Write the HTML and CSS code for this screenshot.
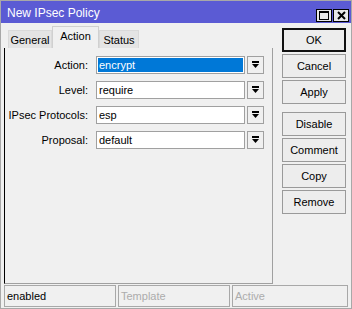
FILE: index.html
```html
<!DOCTYPE html>
<html>
<head>
    <title>New IPsec Policy</title>
    <link rel="stylesheet" href="styles.css">
</head>
<body>
    <div class="window">
        <div class="titlebar">
            <span class="title">New IPsec Policy</span>
            <div class="caption-buttons">
                <span class="cap-btn">
                    <svg width="10" height="9" viewBox="0 0 10 9"><rect x="0.5" y="0.5" width="9" height="8" fill="none" stroke="#000"/><rect x="0" y="0" width="10" height="2" fill="#000"/></svg>
                </span>
                <span class="cap-btn">
                    <svg width="9" height="9" viewBox="0 0 9 9"><path d="M1 1L8 8M8 1L1 8" stroke="#000" stroke-width="2"/></svg>
                </span>
            </div>
        </div>

        <div class="body">
            <div class="main">
                <div class="tabs">
                    <div class="tab tab-general">General</div>
                    <div class="tab tab-action active">Action</div>
                    <div class="tab tab-status">Status</div>
                </div>
                <div class="panel">
                    <div class="row">
                        <span class="label">Action:</span>
                        <div class="field selected">encrypt</div>
                        <div class="drop"><svg width="7" height="8" viewBox="0 0 7 8"><rect x="0" y="0" width="7" height="2"/><path d="M0 3H7L3.5 7Z"/></svg></div>
                    </div>
                    <div class="row">
                        <span class="label">Level:</span>
                        <div class="field">require</div>
                        <div class="drop"><svg width="7" height="8" viewBox="0 0 7 8"><rect x="0" y="0" width="7" height="2"/><path d="M0 3H7L3.5 7Z"/></svg></div>
                    </div>
                    <div class="row">
                        <span class="label">IPsec Protocols:</span>
                        <div class="field">esp</div>
                        <div class="drop"><svg width="7" height="8" viewBox="0 0 7 8"><rect x="0" y="0" width="7" height="2"/><path d="M0 3H7L3.5 7Z"/></svg></div>
                    </div>
                    <div class="row">
                        <span class="label">Proposal:</span>
                        <div class="field">default</div>
                        <div class="drop"><svg width="7" height="8" viewBox="0 0 7 8"><rect x="0" y="0" width="7" height="2"/><path d="M0 3H7L3.5 7Z"/></svg></div>
                    </div>
                </div>
            </div>

            <div class="buttons">
                <button class="btn default">OK</button>
                <button class="btn">Cancel</button>
                <button class="btn">Apply</button>
                <button class="btn group-start">Disable</button>
                <button class="btn">Comment</button>
                <button class="btn">Copy</button>
                <button class="btn">Remove</button>
            </div>
        </div>

        <div class="statusbar">
            <div class="status-cell first">enabled</div>
            <div class="status-cell dim">Template</div>
            <div class="status-cell dim last">Active</div>
        </div>
    </div>
</body>
</html>
```

FILE: styles.css
```css
body {
    margin: 0;
    font-family: "Liberation Sans", Arial, sans-serif;
    font-size: 11px;
    color: #000;
    background-color: #f0f0f0;
}

.window {
    width: 352px;
    height: 309px;
    box-sizing: border-box;
    border: 1px solid #a8a8a8;
    background-color: #f0f0f0;
    display: flex;
    flex-direction: column;
}

.titlebar {
    height: 22px;
    flex: none;
    background-color: #5b5bd4;
    color: #fff;
    display: flex;
    justify-content: space-between;
    align-items: flex-end;
    padding: 0 2px 0 6px;
}

.title {
    font-size: 12px;
    padding-bottom: 3px;
}

.caption-buttons {
    display: flex;
    margin-bottom: 1px;
}

.cap-btn {
    width: 14px;
    height: 11px;
    border: 1px solid #000;
    background-color: #e8e8e8;
    display: flex;
    align-items: center;
    justify-content: center;
    margin-left: 1px;
}

.body {
    height: 262px;
    flex: none;
    box-sizing: border-box;
    padding: 3px 5px 1px 3px;
    display: flex;
}

.main {
    width: 269px;
    display: flex;
    flex-direction: column;
}

.tabs {
    height: 22px;
    display: flex;
    align-items: flex-end;
    padding-left: 4px;
}

.tab {
    height: 18px;
    box-sizing: border-box;
    border: 1px solid #d9d9d9;
    border-bottom: none;
    background-color: #e4e4e4;
    display: flex;
    align-items: center;
    justify-content: center;
}

.tab-general {
    width: 44px;
}

.tab-action {
    width: 47px;
}

.tab-status {
    width: 40px;
}

.tab.active {
    height: 22px;
    background-color: #f0f0f0;
    border-color: #d0d0d0;
    padding-bottom: 3px;
}

.panel {
    flex: 1;
    border-left: 1px solid #000;
    border-right: 1px solid #a0a0a0;
    border-bottom: 1px solid #a0a0a0;
    padding-top: 8px;
}

.row {
    height: 18px;
    display: flex;
    align-items: center;
    margin-bottom: 7px;
}

.label {
    width: 83px;
    text-align: right;
    margin-right: 8px;
}

.field {
    width: 149px;
    height: 18px;
    box-sizing: border-box;
    border: 1px solid #a0a0a0;
    background-color: #fff;
    padding-left: 2px;
    line-height: 16px;
}

.field.selected {
    background-color: #0078d7;
    color: #fff;
    box-shadow: inset 0 0 0 1px #fff;
}

.drop {
    width: 17px;
    height: 18px;
    box-sizing: border-box;
    margin-left: 2px;
    border: 1px solid #a0a0a0;
    background-color: #f0f0f0;
    display: flex;
    align-items: center;
    justify-content: center;
}

.buttons {
    width: 64px;
    margin-left: auto;
    padding-top: 2px;
    display: flex;
    flex-direction: column;
    gap: 2px;
}

.btn {
    height: 24px;
    box-sizing: border-box;
    border: 1px solid #9a9a9a;
    background-color: #ededed;
    font-family: "Liberation Sans", Arial, sans-serif;
    font-size: 11px;
    color: #000;
    padding: 0;
}

.btn.default {
    border: 2px solid #111;
}

.btn.group-start {
    margin-top: 6px;
}

.statusbar {
    height: 22px;
    flex: none;
    display: flex;
    gap: 2px;
    padding: 0 3px 0 3px;
}

.status-cell {
    width: 112px;
    height: 22px;
    box-sizing: border-box;
    border: 1px solid #a8a8a8;
    padding-left: 2px;
    line-height: 20px;
}

.status-cell.last {
    width: 116px;
}

.status-cell.dim {
    color: #acacac;
}
```
